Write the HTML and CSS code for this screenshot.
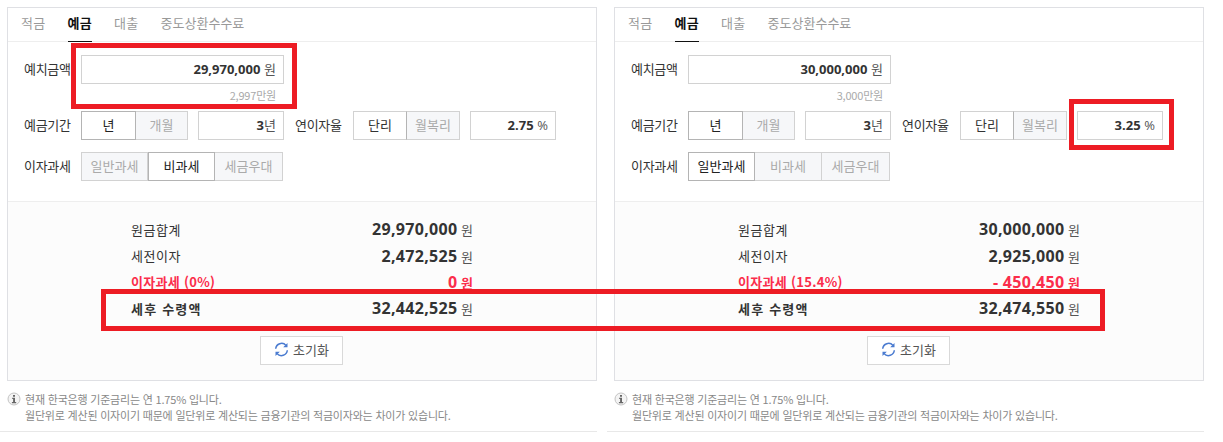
FILE: index.html

```html
<!DOCTYPE html>
<html lang="ko">
<head>
  <meta charset="UTF-8" />
  <title>예금 계산기</title>
  <link rel="stylesheet" href="styles.css">
</head>
<body>
<div class="page">
  <!-- 왼쪽 계산기 -->
  <div class="calc">
    <div class="panel">
      <div class="tabs">
        <span class="tab">적금</span>
        <span class="tab on">예금</span>
        <span class="tab">대출</span>
        <span class="tab">중도상환수수료</span>
      </div>
      <div class="form">
        <div class="row row-amount">
          <span class="label">예치금액</span>
          <div class="field field-amount"><b>29,970,000</b> 원</div>
        </div>
        <div class="hint">2,997만원</div>
        <div class="row">
          <span class="label">예금기간</span>
          <div class="seg">
            <span class="seg-btn w55 on">년</span>
            <span class="seg-btn w52">개월</span>
          </div>
          <div class="field field-short"><b>3</b>년</div>
          <span class="label label-rate">연이자율</span>
          <div class="seg">
            <span class="seg-btn w54 soft">단리</span>
            <span class="seg-btn w53">월복리</span>
          </div>
          <div class="field field-short"><b>2.75</b> <span class="unit">%</span></div>
        </div>
        <div class="row">
          <span class="label">이자과세</span>
          <div class="seg">
            <span class="seg-btn w67">일반과세</span>
            <span class="seg-btn w67 on">비과세</span>
            <span class="seg-btn w68">세금우대</span>
          </div>
        </div>
      </div>
      <div class="result">
        <div class="res-row"><span>원금합계</span><span class="money"><b>29,970,000</b> 원</span></div>
        <div class="res-row"><span>세전이자</span><span class="money"><b>2,472,525</b> 원</span></div>
        <div class="res-row tax"><span>이자과세 (0%)</span><span class="money"><b>0</b> 원</span></div>
        <div class="res-row total"><span>세후 수령액</span><span class="money"><b>32,442,525</b> 원</span></div>
        <div class="reset-wrap">
          <span class="reset">
            <svg class="reset-icon" viewBox="0 0 16 16"><path d="M1.8 7.2A6.3 6.3 0 0 1 12.8 3.6M14.2 8.8A6.3 6.3 0 0 1 3.2 12.4" /><path class="tip" d="M14.4 1v4.6H9.8zM1.6 15v-4.6h4.6z" /></svg>
            초기화
          </span>
        </div>
      </div>
    </div>
    <div class="note">
      <p><svg class="info" viewBox="0 0 14 14"><circle cx="7" cy="7" r="6" /><path d="M6 3h2v1.8H6zM5.2 5.8h2.8v4.2h1.2v1.2H4.9V10h1.2V7H5.2z" /></svg>현재 한국은행 기준금리는 연 1.75% 입니다.</p>
      <p>월단위로 계산된 이자이기 때문에 일단위로 계산되는 금융기관의 적금이자와는 차이가 있습니다.</p>
    </div>
  </div>

  <!-- 오른쪽 계산기 -->
  <div class="calc">
    <div class="panel">
      <div class="tabs">
        <span class="tab">적금</span>
        <span class="tab on">예금</span>
        <span class="tab">대출</span>
        <span class="tab">중도상환수수료</span>
      </div>
      <div class="form">
        <div class="row row-amount">
          <span class="label">예치금액</span>
          <div class="field field-amount"><b>30,000,000</b> 원</div>
        </div>
        <div class="hint">3,000만원</div>
        <div class="row">
          <span class="label">예금기간</span>
          <div class="seg">
            <span class="seg-btn w55 on">년</span>
            <span class="seg-btn w52">개월</span>
          </div>
          <div class="field field-short"><b>3</b>년</div>
          <span class="label label-rate">연이자율</span>
          <div class="seg">
            <span class="seg-btn w54 soft">단리</span>
            <span class="seg-btn w53">월복리</span>
          </div>
          <div class="field field-short"><b>3.25</b> <span class="unit">%</span></div>
        </div>
        <div class="row">
          <span class="label">이자과세</span>
          <div class="seg">
            <span class="seg-btn w67 on">일반과세</span>
            <span class="seg-btn w67">비과세</span>
            <span class="seg-btn w68">세금우대</span>
          </div>
        </div>
      </div>
      <div class="result">
        <div class="res-row"><span>원금합계</span><span class="money"><b>30,000,000</b> 원</span></div>
        <div class="res-row"><span>세전이자</span><span class="money"><b>2,925,000</b> 원</span></div>
        <div class="res-row tax"><span>이자과세 (15.4%)</span><span class="money"><b>- 450,450</b> 원</span></div>
        <div class="res-row total"><span>세후 수령액</span><span class="money"><b>32,474,550</b> 원</span></div>
        <div class="reset-wrap">
          <span class="reset">
            <svg class="reset-icon" viewBox="0 0 16 16"><path d="M1.8 7.2A6.3 6.3 0 0 1 12.8 3.6M14.2 8.8A6.3 6.3 0 0 1 3.2 12.4" /><path class="tip" d="M14.4 1v4.6H9.8zM1.6 15v-4.6h4.6z" /></svg>
            초기화
          </span>
        </div>
      </div>
    </div>
    <div class="note">
      <p><svg class="info" viewBox="0 0 14 14"><circle cx="7" cy="7" r="6" /><path d="M6 3h2v1.8H6zM5.2 5.8h2.8v4.2h1.2v1.2H4.9V10h1.2V7H5.2z" /></svg>현재 한국은행 기준금리는 연 1.75% 입니다.</p>
      <p>월단위로 계산된 이자이기 때문에 일단위로 계산되는 금융기관의 적금이자와는 차이가 있습니다.</p>
    </div>
  </div>
</div>

<!-- 스크린샷 위에 그려진 빨간 표시 -->
<div class="mark mark-amount"></div>
<div class="mark mark-rate"></div>
<div class="mark mark-total"></div>
</body>
</html>
```

FILE: styles.css

```css
* {
  box-sizing: border-box;
}
body {
  margin: 0;
  background: #fff;
  color: #333;
  font-family: "Noto Sans CJK KR", "Noto Sans", sans-serif;
  font-size: 13px;
  overflow: hidden;
}
.page {
  display: flex;
  gap: 17px;
  padding: 7px 0 0 7px;
}
.calc {
  width: 590px;
}
.panel {
  height: 374px;
  border: 1px solid #dfe0e4;
}
.tabs {
  display: flex;
  gap: 22px;
  height: 34px;
  padding-left: 13px;
  border-bottom: 1px solid #eee;
}
.tab {
  height: 34px;
  line-height: 30px;
  color: #999;
  letter-spacing: 0.3px;
}
.tab:last-child {
  letter-spacing: 0;
}
.tab.on {
  color: #111;
  font-weight: 700;
  border-bottom: 1px solid #111;
}
.form {
  height: 160px;
  padding: 13px 0 0 16px;
  border-bottom: 1px solid #eee;
}
.row {
  display: flex;
  align-items: center;
  height: 29px;
  margin-bottom: 12px;
}
.row-amount {
  margin-bottom: 0;
}
.label {
  width: 57px;
  padding-bottom: 2px;
  letter-spacing: -0.3px;
  white-space: nowrap;
}
.label-rate {
  width: 58px;
  margin-left: 11px;
}
.field {
  height: 29px;
  line-height: 25px;
  border: 1px solid #d2d2d2;
  text-align: right;
  padding-right: 7px;
  color: #555;
  background: #fff;
}
.field b {
  color: #333;
  font-family: "Open Sans", sans-serif;
}
.unit {
  font-family: "Open Sans", sans-serif;
  font-size: 13px;
}
.field-amount {
  width: 203px;
}
.field-short {
  width: 86px;
  margin-left: 10px;
}
.hint {
  width: 260px;
  height: 27px;
  line-height: 22px;
  text-align: right;
  padding-right: 8px;
  font-size: 11px;
  letter-spacing: -0.2px;
  color: #aaa;
}
.seg {
  display: flex;
}
.seg-btn {
  height: 29px;
  line-height: 25px;
  text-align: center;
  border: 1px solid #d2d2d2;
  border-left: 0;
  background: #f6f7f9;
  color: #aaa;
}
.seg-btn:first-child {
  border-left: 1px solid #d2d2d2;
}
.seg-btn.on {
  background: #fff;
  color: #222;
  border: 1px solid #b4b4b4;
}
.seg-btn.soft {
  background: #fff;
  color: #333;
  border-right-color: #b4b4b4;
}
.w52 { width: 52px; }
.w53 { width: 53px; }
.w54 { width: 54px; }
.w55 { width: 55px; }
.w67 { width: 67px; }
.w68 { width: 68px; }
.result {
  height: 178px;
  padding: 15px 0 0 123px;
  background: #fcfcfc;
}
.res-row {
  display: flex;
  justify-content: space-between;
  align-items: center;
  width: 342px;
  height: 26.4px;
  padding-bottom: 2px;
  letter-spacing: 0.5px;
}
.money {
  color: #555;
  letter-spacing: 0;
}
.money b {
  font-family: "Open Sans", sans-serif;
  font-size: 16px;
  letter-spacing: 0.3px;
  color: #333;
}
.tax,
.tax .money,
.tax .money b {
  color: #fb2d4b;
  font-weight: 700;
}
.tax span:first-child {
  letter-spacing: 0.3px;
}
.total {
  font-weight: 700;
  letter-spacing: 1.2px;
}
.total .money {
  font-weight: 400;
}
.reset-wrap {
  padding: 13px 0 0 129px;
}
.reset {
  display: inline-flex;
  align-items: center;
  justify-content: center;
  gap: 4px;
  width: 83px;
  height: 29px;
  padding-bottom: 1px;
  border: 1px solid #d9d9d9;
  background: #fff;
  color: #555;
  letter-spacing: 0;
}
.reset-icon {
  width: 15px;
  height: 15px;
  fill: none;
  stroke: #4a7bd0;
  stroke-width: 1.6;
}
.reset-icon .tip {
  fill: #4a7bd0;
  stroke: none;
}
.note {
  height: 41px;
  margin: 10px 0 0 -7px;
  padding: 0 7px;
  width: 597px;
  border-bottom: 1px solid #e8e8e8;
  font-size: 11px;
  line-height: 16px;
  letter-spacing: -0.2px;
  color: #888;
}
.note p {
  margin: 0;
  padding-left: 18px;
  position: relative;
}
.info {
  position: absolute;
  left: 0;
  top: 1px;
  width: 14px;
  height: 14px;
}
.info circle {
  fill: #f4f4f4;
  stroke: #c4c4c4;
}
.info path {
  fill: #666;
}
/* 빨간 표시 */
.mark {
  position: absolute;
  border: 5px solid #ed1c24;
}
.mark-amount {
  left: 71px;
  top: 43px;
  width: 226px;
  height: 66px;
}
.mark-rate {
  left: 1069px;
  top: 99px;
  width: 105px;
  height: 51px;
}
.mark-total {
  left: 101px;
  top: 289px;
  width: 1004px;
  height: 42px;
}
```
